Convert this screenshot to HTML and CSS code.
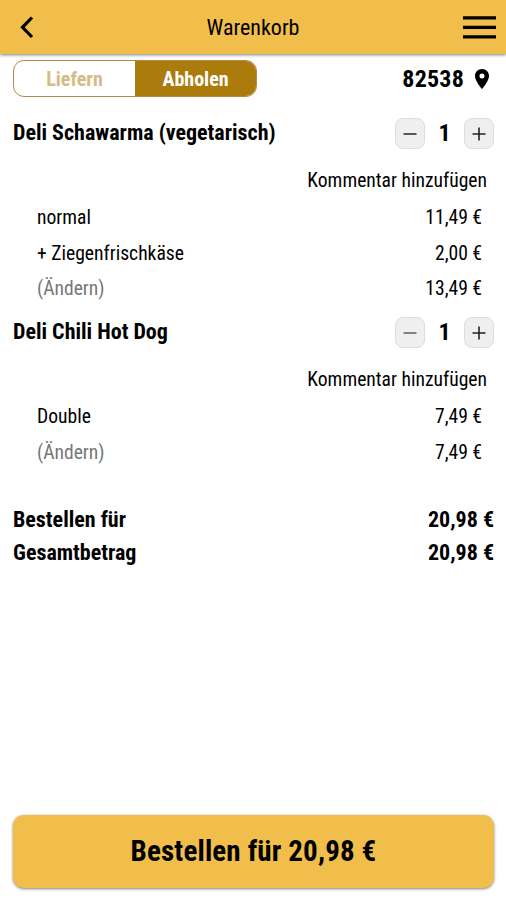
FILE: index.html
```html
<!DOCTYPE html>
<html lang="de">
<head>
    <meta charset="UTF-8">
    <meta name="viewport" content="width=device-width, initial-scale=1.0">
    <link rel="stylesheet" href="styles.css">
    <title>Warenkorb</title>
</head>
<body>
    <header class="topbar">
        <svg class="back" width="16" height="24" viewBox="0 0 16 24"><path d="M14 2.5 L4.5 12.3 L14 22" fill="none" stroke="#000" stroke-width="3.2"/></svg>
        <span class="title">Warenkorb</span>
        <svg class="menu" width="33" height="24" viewBox="0 0 33 24"><path d="M0 2.9 H33 M0 12.4 H33 M0 21.9 H33" stroke="#000" stroke-width="3.2"/></svg>
    </header>

    <main class="cart">
        <div class="delivery">
            <div class="toggle">
                <div class="option">Liefern</div>
                <div class="option active">Abholen</div>
            </div>
            <div class="location">
                <span class="zip">82538</span>
                <svg width="14" height="20" viewBox="0 0 14 20"><path fill="#000" fill-rule="evenodd" d="M7 0 C3 0 0 3 0 7 C0 12 7 20 7 20 C7 20 14 12 14 7 C14 3 11 0 7 0 Z M7 4.4 A2.5 2.5 0 1 1 7 9.4 A2.5 2.5 0 1 1 7 4.4 Z"/></svg>
            </div>
        </div>

        <section class="item">
            <div class="item-head">
                <span class="name">Deli Schawarma (vegetarisch)</span>
                <div class="counter">
                    <button class="step"><svg width="14" height="14" viewBox="0 0 14 14"><path d="M0.5 7 H13.5" stroke="#333" stroke-width="1.6"/></svg></button>
                    <span class="count">1</span>
                    <button class="step"><svg width="14" height="14" viewBox="0 0 14 14"><path d="M0.5 7 H13.5 M7 0.5 V13.5" stroke="#222" stroke-width="1.6"/></svg></button>
                </div>
            </div>
            <div class="comment"><span>Kommentar hinzufügen</span></div>
            <div class="row"><span>normal</span><span class="price">11,49 €</span></div>
            <div class="row"><span>+ Ziegenfrischkäse</span><span class="price">2,00 €</span></div>
            <div class="row"><span class="change">(Ändern)</span><span class="price">13,49 €</span></div>
        </section>

        <section class="item">
            <div class="item-head">
                <span class="name">Deli Chili Hot Dog</span>
                <div class="counter">
                    <button class="step"><svg width="14" height="14" viewBox="0 0 14 14"><path d="M0.5 7 H13.5" stroke="#777" stroke-width="1.8"/></svg></button>
                    <span class="count">1</span>
                    <button class="step"><svg width="14" height="14" viewBox="0 0 14 14"><path d="M0.5 7 H13.5 M7 0.5 V13.5" stroke="#222" stroke-width="1.6"/></svg></button>
                </div>
            </div>
            <div class="comment"><span>Kommentar hinzufügen</span></div>
            <div class="row"><span>Double</span><span class="price">7,49 €</span></div>
            <div class="row"><span class="change">(Ändern)</span><span class="price">7,49 €</span></div>
        </section>

        <section class="totals">
            <div class="total"><span>Bestellen für</span><span class="price">20,98 €</span></div>
            <div class="total"><span>Gesamtbetrag</span><span class="price">20,98 €</span></div>
        </section>
    </main>

    <footer class="footer">
        <button class="order">Bestellen für 20,98 €</button>
    </footer>
</body>
</html>
```
FILE: styles.css
```css
* {
    box-sizing: border-box;
}
body {
    margin: 0;
    height: 900px;
    display: flex;
    flex-direction: column;
    overflow: hidden;
    background: #fff;
    color: #000;
    font-family: "Roboto Condensed", Roboto, sans-serif;
    font-stretch: 75%;
    font-size: 19.6px;
    white-space: nowrap;
}
button {
    font: inherit;
    font-stretch: 75%;
    color: inherit;
    padding: 0;
    border: none;
}
svg {
    display: block;
}
.topbar {
    display: grid;
    grid-template-columns: 1fr auto 1fr;
    align-items: center;
    height: 54px;
    padding: 0 10px;
    background: #f1be4b;
    box-shadow: 0 1px 3px rgba(0, 0, 0, 0.5);
}
.back {
    margin-left: 8px;
}
.title {
    font-size: 22px;
}
.menu {
    justify-self: end;
}
.cart {
    flex: 1;
    padding: 6px 12px 0 13px;
}
.delivery {
    display: flex;
    justify-content: space-between;
    align-items: center;
    height: 37px;
}
.toggle {
    display: flex;
    width: 244px;
    height: 37px;
    border: 1px solid #b58a50;
    border-radius: 11px;
    overflow: hidden;
}
.option {
    flex: 1;
    line-height: 36px;
    text-align: center;
    font-size: 20px;
    font-weight: 700;
    color: #d5bb87;
}
.option.active {
    background: #ab7b0b;
    color: #fff;
}
.location {
    display: flex;
    align-items: center;
    gap: 11px;
    padding-right: 5px;
}
.zip {
    font-size: 24px;
    font-weight: 700;
    letter-spacing: 0.2px;
}
.item {
    padding-top: 21px;
}
.item + .item {
    padding-top: 10.5px;
}
.item-head {
    display: flex;
    justify-content: space-between;
    height: 32px;
    line-height: 29px;
}
.name {
    font-size: 22px;
    font-weight: 700;
}
.counter {
    display: flex;
    justify-content: space-between;
    width: 99px;
}
.step {
    display: flex;
    align-items: center;
    justify-content: center;
    width: 30px;
    height: 31px;
    background: #efefef;
    border: 1px solid #ddd;
    border-radius: 8px;
}
.count {
    font-size: 24px;
    font-weight: 700;
    line-height: 31px;
}
.comment {
    display: flex;
    justify-content: flex-end;
    padding: 16px 7px 0 0;
    height: 50px;
    line-height: 30px;
}
.row {
    display: flex;
    justify-content: space-between;
    height: 35.5px;
    line-height: 35.5px;
    padding: 0 12px 0 24px;
}
.change {
    color: #777;
}
.totals {
    padding-top: 32.5px;
}
.total {
    display: flex;
    justify-content: space-between;
    height: 33px;
    line-height: 33px;
    font-size: 22px;
    font-weight: 700;
}
.footer {
    padding: 0 12px 12px 13px;
}
.order {
    width: 100%;
    height: 73px;
    padding-bottom: 1px;
    background: #f1be4b;
    border-radius: 11px;
    box-shadow: 0 1px 3px rgba(0, 0, 0, 0.5);
    font-size: 29px;
    font-weight: 700;
    letter-spacing: 0.15px;
}
```
